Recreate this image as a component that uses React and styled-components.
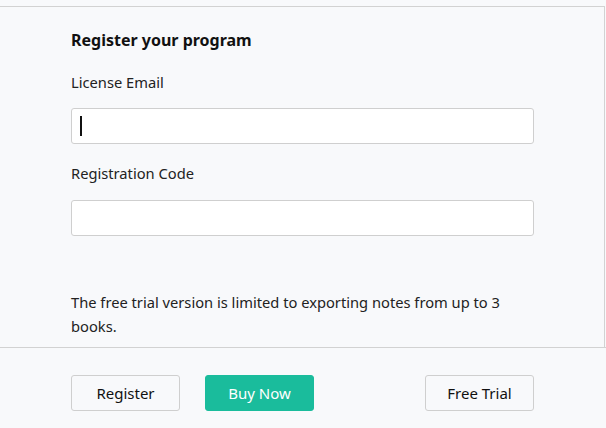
import React from 'react';
import styled, { createGlobalStyle } from 'styled-components';

const GlobalStyle = createGlobalStyle`
  html, body {
    margin: 0;
    padding: 0;
    background: #f8f9fb;
    font-family: "Noto Sans", "Open Sans", sans-serif;
    color: #222;
  }
`;

const Page = styled.div`
  width: 606px;
  height: 428px;
  padding-top: 6px;
  box-sizing: border-box;
  display: flex;
  flex-direction: column;
`;

const Panel = styled.div`
  width: 605px;
  height: 341px;
  box-sizing: border-box;
  border-top: 1px solid #d2d2d2;
  border-right: 1px solid #d2d2d2;
  padding: 23px 71px 0 71px;
  display: flex;
  flex-direction: column;
`;

const Title = styled.h3`
  margin: 0;
  font-size: 16px;
  line-height: 20px;
  font-weight: 700;
  color: #111;
`;

const Label = styled.label`
  display: block;
  font-size: 14.7px;
  line-height: 20px;
  margin-top: ${p => p.$gap}px;
  color: #222;
`;

const Field = styled.div`
  position: relative;
  margin-top: ${p => p.$gap}px;
`;

const Input = styled.input`
  display: block;
  box-sizing: border-box;
  width: 463px;
  height: 36px;
  border: 1px solid #cfcfcf;
  border-radius: 3px;
  background: #fff;
  padding: 0 8px;
  font-family: inherit;
  font-size: 15px;
  outline: none;
`;

const Caret = styled.span`
  position: absolute;
  left: 9px;
  top: 8px;
  width: 2px;
  height: 20px;
  background: #111;
`;

const Note = styled.p`
  margin: 54px 0 0 0;
  font-size: 14.7px;
  line-height: 24px;
  color: #222;
  width: 463px;
`;

const Footer = styled.div`
  flex: 1;
  border-top: 1px solid #d2d2d2;
  padding: 27px 72px 0 71px;
  display: flex;
  align-items: flex-start;
`;

const Button = styled.button`
  box-sizing: border-box;
  width: 109px;
  height: 36px;
  border-radius: 3px;
  font-family: inherit;
  font-size: 15px;
  cursor: pointer;
  border: 1px solid ${p => (p.$primary ? '#1abc9c' : '#cfcfcf')};
  background: ${p => (p.$primary ? '#1abc9c' : '#f8f9fb')};
  color: ${p => (p.$primary ? '#fff' : '#111')};
  margin-left: ${p => p.$gap || 0}px;
`;

const Spacer = styled.div`
  flex: 1;
`;

export default function App() {
  return (
    <>
      <GlobalStyle />
      <Page>
        <Panel>
          <Title>Register your program</Title>
          <Label $gap={22}>License Email</Label>
          <Field $gap={16}>
            <Input />
            <Caret />
          </Field>
          <Label $gap={19}>Registration Code</Label>
          <Field $gap={17}>
            <Input />
          </Field>
          <Note>The free trial version is limited to exporting notes from up to 3 books.</Note>
        </Panel>
        <Footer>
          <Button>Register</Button>
          <Button $primary $gap={25}>Buy Now</Button>
          <Spacer />
          <Button>Free Trial</Button>
        </Footer>
      </Page>
    </>
  );
}
